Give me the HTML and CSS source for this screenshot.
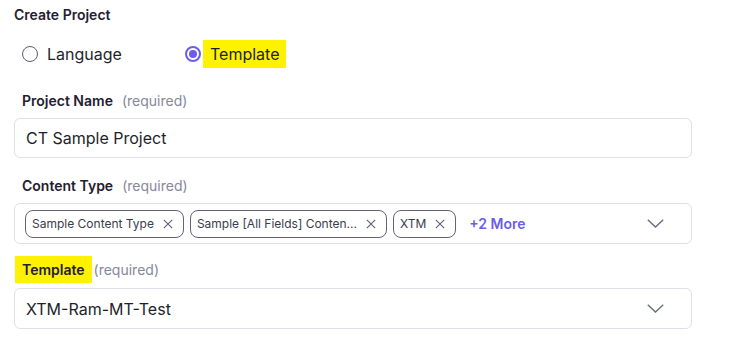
FILE: index.html
```html
<!DOCTYPE html>
<html>
<head>
<meta charset="utf-8">
<link rel="stylesheet" href="styles.css">
</head>
<body>
<div class="page">
  <div class="title">Create Project</div>
  <div class="radios">
    <label class="option opt-lang">
      <span class="radio"></span>
      <span class="opt-text">Language</span>
    </label>
    <label class="option">
      <span class="radio checked"></span>
      <span class="opt-text hl">Template</span>
    </label>
  </div>

  <div class="label-row first">
    <span class="label">Project Name</span>
    <span class="req">(required)</span>
  </div>
  <div class="input">CT Sample Project</div>

  <div class="label-row second">
    <span class="label">Content Type</span>
    <span class="req">(required)</span>
  </div>
  <div class="multi">
    <div class="chips">
      <span class="chip">Sample Content Type<span class="x"><svg width="10" height="10" viewBox="0 0 10 10"><path d="M0.8 0.8L9.2 9.2M9.2 0.8L0.8 9.2" stroke="#5f6070" stroke-width="1.1" fill="none"/></svg></span></span>
      <span class="chip">Sample [All Fields] Conten...<span class="x"><svg width="10" height="10" viewBox="0 0 10 10"><path d="M0.8 0.8L9.2 9.2M9.2 0.8L0.8 9.2" stroke="#5f6070" stroke-width="1.1" fill="none"/></svg></span></span>
      <span class="chip">XTM<span class="x"><svg width="10" height="10" viewBox="0 0 10 10"><path d="M0.8 0.8L9.2 9.2M9.2 0.8L0.8 9.2" stroke="#5f6070" stroke-width="1.1" fill="none"/></svg></span></span>
      <span class="more">+2 More</span>
    </div>
    <svg class="chev" width="17" height="9" viewBox="0 0 17 9"><path d="M0.8 0.8L8.5 8L16.2 0.8" stroke="#6b7080" stroke-width="1.5" fill="none"/></svg>
  </div>

  <div class="label-row third">
    <span class="label hl">Template</span>
    <span class="req">(required)</span>
  </div>
  <div class="select">
    <span>XTM-Ram-MT-Test</span>
    <svg class="chev" width="17" height="9" viewBox="0 0 17 9"><path d="M0.8 0.8L8.5 8L16.2 0.8" stroke="#6b7080" stroke-width="1.5" fill="none"/></svg>
  </div>
</div>
</body>
</html>
```

FILE: styles.css
```css
html, body {
  margin: 0;
  padding: 0;
  background: #ffffff;
}

body {
  font-family: Inter, "Noto Sans", sans-serif;
  color: #1e1f2b;
}

.page {
  width: 678px;
  padding: 5px 0 0 14px;
}

.title {
  font-size: 14px;
  font-weight: 600;
  line-height: 20px;
  color: #1f2030;
}

.radios {
  margin-top: 15px;
  height: 28px;
  display: flex;
  align-items: center;
  padding-left: 8px;
}

.option {
  display: flex;
  align-items: center;
  gap: 2px;
  font-size: 16px;
  line-height: 20px;
  color: #1e1f2b;
}

.opt-lang {
  width: 163px;
}

.radio {
  width: 16px;
  height: 16px;
  box-sizing: border-box;
  border: 1.5px solid #5a5c6c;
  border-radius: 50%;
  display: inline-block;
  position: relative;
}

.radio.checked {
  border: 2px solid #6c5ce7;
  background: #ffffff;
}

.radio.checked::after {
  content: "";
  position: absolute;
  left: 2px;
  top: 2px;
  width: 8px;
  height: 8px;
  border-radius: 50%;
  background: #6c5ce7;
}

.opt-text {
  padding: 4px 7px;
}

.hl {
  background: #fff200;
}

.label-row {
  display: flex;
  align-items: center;
  gap: 2px;
  padding-left: 1px;
  margin-bottom: 4px;
}

.label-row.first { margin-top: 19px; }
.label-row.second { margin-top: 14px; }
.label-row.third { margin-top: 12px; margin-bottom: 5px; }

.label {
  font-size: 14px;
  font-weight: 600;
  line-height: 19px;
  padding: 4px 7px;
  color: #1f2030;
}

.req {
  font-size: 14px;
  color: #85879a;
  line-height: 19px;
}

.input, .select {
  height: 40px;
  box-sizing: border-box;
  border: 1px solid #dde0ea;
  border-radius: 6px;
  padding: 0 27px 0 11px;
  font-size: 16px;
  display: flex;
  align-items: center;
  color: #1e1f2b;
}

.select {
  justify-content: space-between;
  height: 41px;
}

.multi {
  height: 41px;
  box-sizing: border-box;
  border: 1px solid #dde0ea;
  border-radius: 6px;
  padding: 0 27px 0 10px;
  display: flex;
  align-items: center;
  justify-content: space-between;
}

.chips {
  display: flex;
  align-items: center;
  gap: 6px;
}

.chip {
  height: 28px;
  box-sizing: border-box;
  border: 1px solid #63647a;
  border-radius: 8px;
  padding: 0 8px 0 6px;
  display: flex;
  align-items: center;
  gap: 7px;
  font-size: 12px;
  color: #3b3c4c;
  white-space: nowrap;
}

.x {
  width: 14px;
  height: 14px;
  display: flex;
  align-items: center;
  justify-content: center;
}

.more {
  margin-left: 7px;
  font-size: 14px;
  font-weight: 600;
  color: #6c5ce7;
}

.chev {
  display: block;
}
```
